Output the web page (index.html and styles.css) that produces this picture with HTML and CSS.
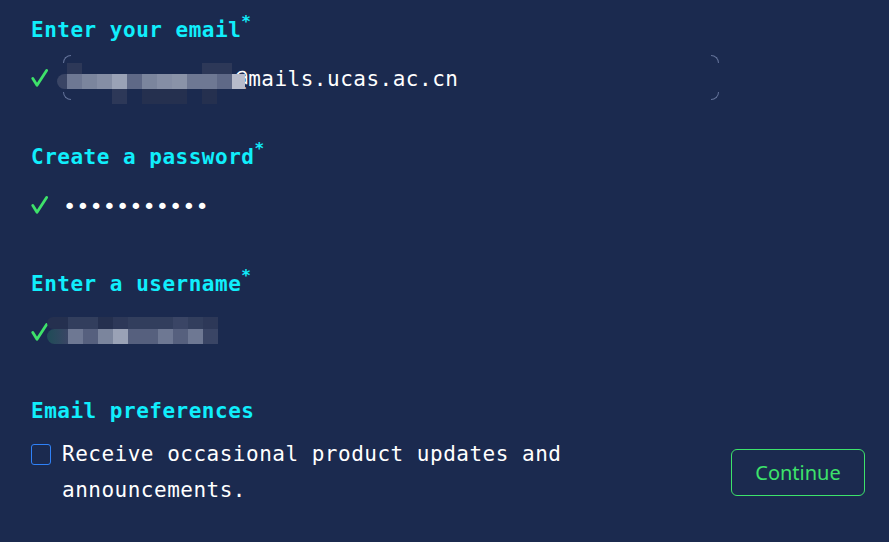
FILE: index.html
```html
<!DOCTYPE html>
<html lang="en">
<head>
<meta charset="utf-8">
<title>Sign up</title>
<link rel="stylesheet" href="styles.css">
</head>
<body>
<main class="form">
  <section class="field">
    <label class="label">Enter your email<span class="req">*</span></label>
    <div class="row">
      <svg class="check" viewBox="0 0 17 18"><polyline points="1.8,9.5 6,16.3 15.6,1.5"/></svg>
      <div class="input">
        <span class="corner tl"></span><span class="corner tr"></span><span class="corner bl"></span><span class="corner br"></span>
        <span class="value email-value">@mails.ucas.ac.cn</span>
      </div>
      <div class="mosaic mosaic-email">
        <i class="p0"></i><i class="p2"></i><i class="p0"></i><i class="p0"></i><i class="p0"></i><i class="p0"></i><i class="p0"></i><i class="p0"></i><i class="p0"></i><i class="p0"></i><i class="p2"></i><i class="p2"></i><i class="p0"></i>
        <i class="p4 edge"></i><i class="p7"></i><i class="p8"></i><i class="p9"></i><i class="p11"></i><i class="p6"></i><i class="p8"></i><i class="p9"></i><i class="p10"></i><i class="p7"></i><i class="p7"></i><i class="p6"></i><i class="p12"></i>
        <i class="p0"></i><i class="p0"></i><i class="p0"></i><i class="p0"></i><i class="p2"></i><i class="p0"></i><i class="p1"></i><i class="p1"></i><i class="p1"></i><i class="p0"></i><i class="p1"></i><i class="p0"></i><i class="p0"></i>
      </div>
    </div>
  </section>

  <section class="field">
    <label class="label">Create a password<span class="req">*</span></label>
    <div class="row">
      <svg class="check" viewBox="0 0 17 18"><polyline points="1.8,9.5 6,16.3 15.6,1.5"/></svg>
      <div class="input">
        <span class="value password-value">•••••••••••</span>
      </div>
    </div>
  </section>

  <section class="field">
    <label class="label">Enter a username<span class="req">*</span></label>
    <div class="row">
      <svg class="check" viewBox="0 0 17 18"><polyline points="1.8,9.5 6,16.3 15.6,1.5"/></svg>
      <div class="input"></div>
      <div class="mosaic mosaic-user">
        <i class="p1 edge"></i><i class="p3"></i><i class="p3"></i><i class="p1"></i><i class="p2"></i><i class="p3"></i><i class="p3"></i><i class="p3"></i><i class="p4"></i><i class="p3"></i><i class="p2"></i>
        <i class="p4 edge teal"></i><i class="p7"></i><i class="p5"></i><i class="p8"></i><i class="p11"></i><i class="p5"></i><i class="p5"></i><i class="p7"></i><i class="p5"></i><i class="p7"></i><i class="p4"></i>
      </div>
    </div>
  </section>

  <section class="prefs">
    <div class="label">Email preferences</div>
    <div class="prefs-row">
      <label class="opt">
        <span class="box"></span>
        <span class="opt-text">Receive occasional product updates and announcements.</span>
      </label>
      <button class="continue" type="button">Continue</button>
    </div>
  </section>
</main>
</body>
</html>
```

FILE: styles.css
```css
html, body {
  margin: 0;
  padding: 0;
}

body {
  background: #1b2a4f;
  font-family: "DejaVu Sans Mono", "Liberation Mono", monospace;
  width: 889px;
  height: 542px;
  overflow: hidden;
}

.form {
  padding: 16px 24px 0 31px;
}

.field {
  margin-bottom: 43px;
}

.label {
  display: block;
  color: #10eefc;
  font-weight: bold;
  font-size: 21px;
  line-height: 28px;
  letter-spacing: 0.5px;
}

.req {
  position: relative;
  top: -3px;
  font-size: 16px;
  line-height: 18px;
  vertical-align: top;
  letter-spacing: 0;
}

.row {
  position: relative;
  display: flex;
  align-items: center;
  height: 45px;
  margin-top: 11px;
}

.check {
  flex: none;
  width: 17px;
  height: 18px;
  margin-right: 15px;
  fill: none;
  stroke: #3ee26a;
  stroke-width: 2.8;
  stroke-linecap: round;
  stroke-linejoin: round;
}

.input {
  position: relative;
  flex: none;
  width: 656px;
  height: 45px;
  display: flex;
  align-items: center;
  color: #ffffff;
  font-size: 21px;
  letter-spacing: 0.5px;
}

.email-value {
  padding-left: 172px;
  padding-top: 2px;
}

.password-value {
  font-size: 22px;
  letter-spacing: 0;
  padding-top: 4px;
}

.corner {
  position: absolute;
  width: 7px;
  height: 7px;
  border: 0 solid #64739a;
}

.tl { left: 0; top: 0; border-top-width: 1px; border-left-width: 1px; border-top-left-radius: 8px; }
.tr { right: 0; top: 0; border-top-width: 1px; border-right-width: 1px; border-top-right-radius: 8px; }
.bl { left: 0; bottom: 0; border-bottom-width: 1px; border-left-width: 1px; border-bottom-left-radius: 8px; }
.br { right: 0; bottom: 0; border-bottom-width: 1px; border-right-width: 1px; border-bottom-right-radius: 8px; }

.mosaic {
  position: absolute;
  display: grid;
  top: 8px;
}

.mosaic i {
  display: block;
}

.mosaic-email {
  left: 26px;
  grid-template-columns: 10px repeat(11, 15px) 13px;
  grid-template-rows: 11px 15px 15px;
}

.mosaic-user {
  left: 16px;
  grid-template-columns: 21px repeat(10, 15px);
  grid-template-rows: 12px 15px;
}

.edge { border-radius: 8px 0 0 8px; }
.teal { background: linear-gradient(90deg, #1f4c57, #3a4565) !important; }

.p0 { background: transparent; }
.p1 { background: #25304f; }
.p2 { background: #2d3858; }
.p3 { background: #323e5d; }
.p4 { background: #3a4565; }
.p5 { background: #56607e; }
.p6 { background: #5f6987; }
.p7 { background: #6e7893; }
.p8 { background: #7b859d; }
.p9 { background: #858ea5; }
.p10 { background: #8a93a8; }
.p11 { background: #9aa2b6; }
.p12 { background: #b8bccb; }

.prefs-row {
  display: flex;
  align-items: center;
  justify-content: space-between;
  margin-top: 11px;
}

.opt {
  display: flex;
  align-items: flex-start;
}

.box {
  flex: none;
  width: 18px;
  height: 19px;
  margin-top: 8px;
  margin-right: 11px;
  border: 1px solid #2f81f7;
  border-radius: 3px;
}

.opt-text {
  width: 540px;
  color: #ffffff;
  font-size: 21px;
  line-height: 36px;
  letter-spacing: 0.5px;
}

.continue {
  width: 134px;
  height: 47px;
  padding: 0;
  border: 1px solid #3de36b;
  border-radius: 6px;
  background: transparent;
  color: #3de36b;
  font-family: "Noto Sans", "Open Sans", sans-serif;
  font-size: 20px;
}
```
